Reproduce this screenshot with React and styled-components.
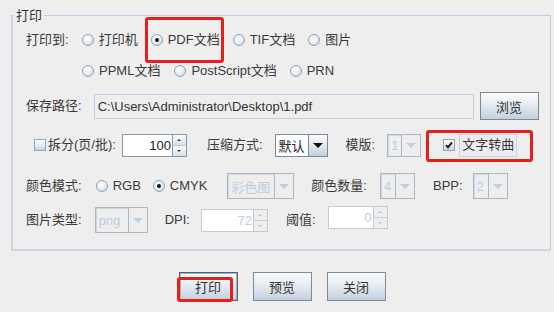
import React from 'react';
import styled, { createGlobalStyle, css } from 'styled-components';

const GlobalStyle = createGlobalStyle`
  html, body {
    margin: 0;
    padding: 0;
    background: #eeeeee;
  }
  body {
    font-family: 'Liberation Sans', 'Noto Sans CJK SC', sans-serif;
    font-size: 13px;
    color: #333;
  }
`;

const Page = styled.div`
  width: 554px;
  height: 312px;
  box-sizing: border-box;
  padding: 7px 3px 0 11px;
  overflow: hidden;
`;

const Panel = styled.fieldset`
  margin: 0;
  min-width: 0;
  padding: 3px 0 16px 0;
  border-top: 1px solid #b8cfe5;
  border-right: 1px solid #b8cfe5;
  border-left: 2px solid #c9d6e3;
  border-bottom: 2px solid #c9d6e3;
`;

const Legend = styled.legend`
  margin-left: 1px;
  padding: 0 2px;
  line-height: 17px;
  color: #333;
`;

const Row = styled.div`
  display: flex;
  align-items: center;
  height: ${p => p.$h || 26}px;
  margin-top: ${p => p.$mt || 0}px;
`;

const Text = styled.span`
  margin-left: ${p => p.$ml || 0}px;
  white-space: nowrap;
  line-height: 16px;
  color: ${p => (p.$disabled ? '#b8cfe5' : '#3a3a3a')};
`;

// red annotation frame drawn over a control
const Mark = styled.span`
  position: relative;
  display: inline-flex;
  align-items: center;
  margin-left: ${p => p.$ml || 0}px;

  &::after {
    content: '';
    position: absolute;
    top: ${p => p.$t}px;
    right: ${p => p.$r}px;
    bottom: ${p => p.$b}px;
    left: ${p => p.$l}px;
    border: 3px solid #e5201c;
    border-radius: 3px;
    pointer-events: none;
  }
`;

const Choice = styled.label`
  display: inline-flex;
  align-items: center;
  gap: ${p => p.$gap ?? 5}px;
  margin-left: ${p => p.$ml || 0}px;
  white-space: nowrap;
  line-height: 16px;
  color: #3a3a3a;
`;

const RadioDot = styled.span`
  position: relative;
  width: 12px;
  height: 12px;
  box-sizing: border-box;
  border-radius: 50%;
  border: 1px solid #8ea4b9;
  background: radial-gradient(circle at 40% 35%, #ffffff 0%, #eef3f8 40%, #bfcedd 100%);

  ${p =>
    p.$on &&
    css`
      &::after {
        content: '';
        position: absolute;
        left: 3px;
        top: 3px;
        width: 4px;
        height: 4px;
        border-radius: 50%;
        background: #111;
      }
    `}
`;

const CheckBox = styled.span`
  width: 12px;
  height: 12px;
  box-sizing: border-box;
  border: 1px solid #8ea4b9;
  background: linear-gradient(#ffffff, #c9d6e3);
  display: inline-flex;
  align-items: center;
  justify-content: center;
`;

const FocusLabel = styled.span`
  display: inline-flex;
  align-items: center;
  height: 23px;
  box-sizing: border-box;
  padding: 0 2px;
  border: 1px solid #c3d4e6;
  background: #eaeef2;
`;

const TextField = styled.div`
  width: ${p => p.$w}px;
  height: 25px;
  margin-left: ${p => p.$ml || 0}px;
  box-sizing: border-box;
  border: 1px solid #b8cfe5;
  background: #eeeeee;
  padding-left: 3px;
  display: flex;
  align-items: center;
  white-space: nowrap;
  overflow: hidden;
`;

const Button = styled.button`
  width: 59px;
  height: ${p => p.$h || 29}px;
  margin: 0 0 0 ${p => p.$ml || 0}px;
  padding: 0;
  box-sizing: border-box;
  border: 1px solid #7a8a99;
  border-radius: 0;
  font: inherit;
  color: #333;
  background: linear-gradient(to bottom, #fbfcfd 0%, #e8eef4 40%, #c2d0dd 100%);

  ${p =>
    p.$default &&
    css`
      border-color: #58636e;
      box-shadow: inset 0 0 0 1px #9fb0c1;
    `}
`;

const Combo = styled.div`
  display: flex;
  width: ${p => p.$w}px;
  height: ${p => p.$h || 23}px;
  margin-left: ${p => p.$ml || 0}px;
  box-sizing: border-box;
  border: 1px solid ${p => (p.$disabled ? '#aeb6bf' : '#7a8a99')};
  background: ${p => (p.$disabled ? '#eeeeee' : '#ffffff')};
`;

const ComboValue = styled.span`
  flex: 1;
  display: flex;
  align-items: center;
  padding-left: 2px;
  white-space: nowrap;
  overflow: hidden;
  color: ${p => (p.$disabled ? '#b8cfe5' : '#222')};
  border-top: 1px solid ${p => (p.$disabled ? '#c8d8e8' : '#ffffff')};
  border-left: 1px solid ${p => (p.$disabled ? '#c8d8e8' : '#ffffff')};
`;

const ComboArrow = styled.span`
  width: 18px;
  display: flex;
  align-items: center;
  justify-content: center;
  border-left: 1px solid ${p => (p.$disabled ? '#aeb6bf' : '#7a8a99')};
  background: ${p =>
    p.$disabled ? '#eeeeee' : 'linear-gradient(to bottom, #fbfcfd 0%, #e2e9f0 45%, #c2d0dd 100%)'};

  &::after {
    content: '';
    border-left: 5px solid transparent;
    border-right: 5px solid transparent;
    border-top: 5px solid ${p => (p.$disabled ? '#b8cfe5' : '#111')};
  }
`;

const Spinner = styled.div`
  display: flex;
  width: ${p => p.$w}px;
  height: 23px;
  margin-left: ${p => p.$ml || 0}px;
  box-sizing: border-box;
  border: 1px solid ${p => (p.$disabled ? '#c3ccd5' : '#8798a8')};
  align-self: ${p => (p.$up ? 'flex-start' : 'center')};
  margin-top: ${p => (p.$up ? -1 : 0)}px;
`;

const SpinField = styled.span`
  flex: 1;
  display: flex;
  align-items: center;
  justify-content: flex-end;
  padding-right: 1px;
  background: #ffffff;
  color: ${p => (p.$disabled ? '#b8cfe5' : '#222')};
`;

const SpinButtons = styled.span`
  width: 13px;
  display: flex;
  flex-direction: column;
  border-left: 1px solid ${p => (p.$disabled ? '#c3ccd5' : '#8798a8')};
`;

const SpinBtn = styled.span`
  flex: 1;
  display: flex;
  align-items: center;
  justify-content: center;
  background: ${p =>
    p.$disabled ? '#eeeeee' : 'linear-gradient(to bottom, #fbfcfd, #d6e0ea)'};
  & + & {
    border-top: 1px solid ${p => (p.$disabled ? '#c3ccd5' : '#8798a8')};
  }

  &::after {
    content: '';
    border-left: 2px solid transparent;
    border-right: 2px solid transparent;
    ${p =>
      p.$down
        ? css`border-top: 2px solid ${p.$disabled ? '#b8c4d0' : '#333'};`
        : css`border-bottom: 2px solid ${p.$disabled ? '#b8c4d0' : '#333'};`}
  }
`;

const ButtonBar = styled.div`
  display: flex;
  justify-content: center;
  margin-top: 21px;
  padding-left: 2px;
  gap: 15px;
`;

const Radio = ({ on, label, ml }) => (
  <Choice $ml={ml}>
    <RadioDot $on={on} />
    {label}
  </Choice>
);

const Check = () => (
  <svg width="8" height="8" viewBox="0 0 8 8">
    <path d="M1 4.2 L3 6.4 L7 1.4" fill="none" stroke="#111" strokeWidth="1.8" />
  </svg>
);

const Select = ({ value, w, h, ml, disabled }) => (
  <Combo $w={w} $h={h} $ml={ml} $disabled={disabled}>
    <ComboValue $disabled={disabled}>{value}</ComboValue>
    <ComboArrow $disabled={disabled} />
  </Combo>
);

const NumberBox = ({ value, w, ml, disabled, up }) => (
  <Spinner $w={w} $ml={ml} $disabled={disabled} $up={up}>
    <SpinField $disabled={disabled}>{value}</SpinField>
    <SpinButtons $disabled={disabled}>
      <SpinBtn $disabled={disabled} />
      <SpinBtn $disabled={disabled} $down />
    </SpinButtons>
  </Spinner>
);

export default function App() {
  return (
    <Page>
      <GlobalStyle />
      <Panel>
        <Legend>打印</Legend>

        <Row>
          <Text $ml={13}>打印到:</Text>
          <Radio label="打印机" ml={13} />
          <Mark $ml={13} $t={-15} $r={-4} $b={-15} $l={-6}>
            <Radio on label="PDF文档" />
          </Mark>
          <Radio label="TIF文档" ml={13} />
          <Radio label="图片" ml={13} />
        </Row>

        <Row $mt={5}>
          <Radio label="PPML文档" ml={69} />
          <Radio label="PostScript文档" ml={14} />
          <Radio label="PRN" ml={13} />
        </Row>

        <Row $mt={8} $h={28}>
          <Text $ml={13}>保存路径:</Text>
          <TextField $w={380} $ml={12}>C:\Users\Administrator\Desktop\1.pdf</TextField>
          <Button $ml={6} $h={28}>浏览</Button>
        </Row>

        <Row $mt={12}>
          <Choice $ml={21} $gap={2}>
            <CheckBox />
            拆分(页/批):
          </Choice>
          <NumberBox value="100" w={65} ml={6} />
          <Text $ml={20}>压缩方式:</Text>
          <Select value="默认" w={53} ml={12} />
          <Text $ml={18}>模版:</Text>
          <Select value="1" w={34} ml={12} disabled />
          <Mark $ml={22} $t={-4} $r={-16} $b={-5} $l={-17}>
            <Choice $gap={4}>
              <CheckBox>
                <Check />
              </CheckBox>
              <FocusLabel>文字转曲</FocusLabel>
            </Choice>
          </Mark>
        </Row>

        <Row $mt={15}>
          <Text $ml={13}>颜色模式:</Text>
          <Radio label="RGB" ml={14} />
          <Radio on label="CMYK" ml={12} />
          <Select value="彩色图" w={67} h={26} ml={20} disabled />
          <Text $ml={17}>颜色数量:</Text>
          <Select value="4" w={35} h={26} ml={13} disabled />
          <Text $ml={18}>BPP:</Text>
          <Select value="2" w={35} h={26} ml={10} disabled />
        </Row>

        <Row $mt={8}>
          <Text $ml={13}>图片类型:</Text>
          <Select value="png" w={53} h={26} ml={13} disabled />
          <Text $ml={17}>DPI:</Text>
          <NumberBox value="72" w={67} ml={11} disabled />
          <Text $ml={18}>阈值:</Text>
          <NumberBox value="0" w={60} ml={12} disabled up />
        </Row>
      </Panel>

      <ButtonBar>
        <Mark $t={5} $r={5} $b={-1} $l={-2}>
          <Button $default>打印</Button>
        </Mark>
        <Button>预览</Button>
        <Button>关闭</Button>
      </ButtonBar>
    </Page>
  );
}
